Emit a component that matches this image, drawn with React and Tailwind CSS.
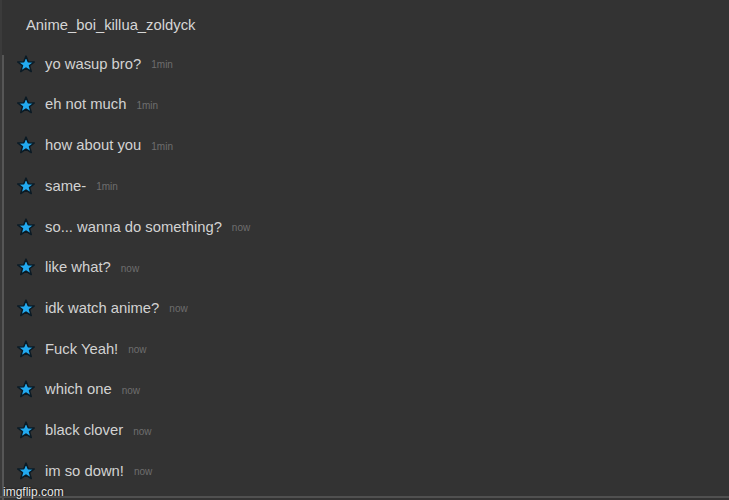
import React from "react";

const msgs = [
  ["yo wasup bro?", "1min"],
  ["eh not much", "1min"],
  ["how about you", "1min"],
  ["same-", "1min"],
  ["so... wanna do something?", "now"],
  ["like what?", "now"],
  ["idk watch anime?", "now"],
  ["Fuck Yeah!", "now"],
  ["which one", "now"],
  ["black clover", "now"],
  ["im so down!", "now"],
];

function Star() {
  return (
    <svg width="18" height="18" viewBox="0 0 24 24" className="shrink-0">
      <polygon
        points="12,1.5 15,9 23,9.3 16.7,14.2 19,22 12,17.4 5,22 7.3,14.2 1,9.3 9,9"
        fill="#22aaf0"
        stroke="#0b1a24"
        strokeWidth="2"
        strokeLinejoin="round"
      />
    </svg>
  );
}

export default function App() {
  return (
    <div
      className="relative w-[729px] h-[500px] bg-[#333333] overflow-hidden"
      style={{ fontFamily: '"Liberation Sans", Arial, sans-serif' }}
    >
      <div className="absolute left-0 top-0 bottom-0 w-[2px] bg-[#3b3b3b]" />
      <div className="absolute left-[2px] top-[55px] bottom-0 w-[2px] bg-[#565656]" />
      <div className="absolute left-0 right-0 bottom-[2px] h-[2px] bg-[#505050]" />
      <div className="flex flex-col">
        <div className="h-[43.5px] pl-[26px] pt-[16px] text-[14.8px] leading-[18px] text-[#d6d6d6]">
          Anime_boi_killua_zoldyck
        </div>
        {msgs.map(([t, time], i) => (
          <div key={i} className="h-[40.7px] flex items-center pl-[17px]">
            <Star />
            <span className="ml-[10px] text-[14.8px] text-[#d2d2d2]">{t}</span>
            <span className="ml-[10px] text-[10px] text-[#6e6e6e] mt-[2px]">{time}</span>
          </div>
        ))}
      </div>
      <div
        className="absolute left-[3px] bottom-[1px] text-[12px] leading-[14px] text-[#e8e8e8]"
        style={{ textShadow: "0 0 2px #000" }}
      >
        imgflip.com
      </div>
    </div>
  );
}
